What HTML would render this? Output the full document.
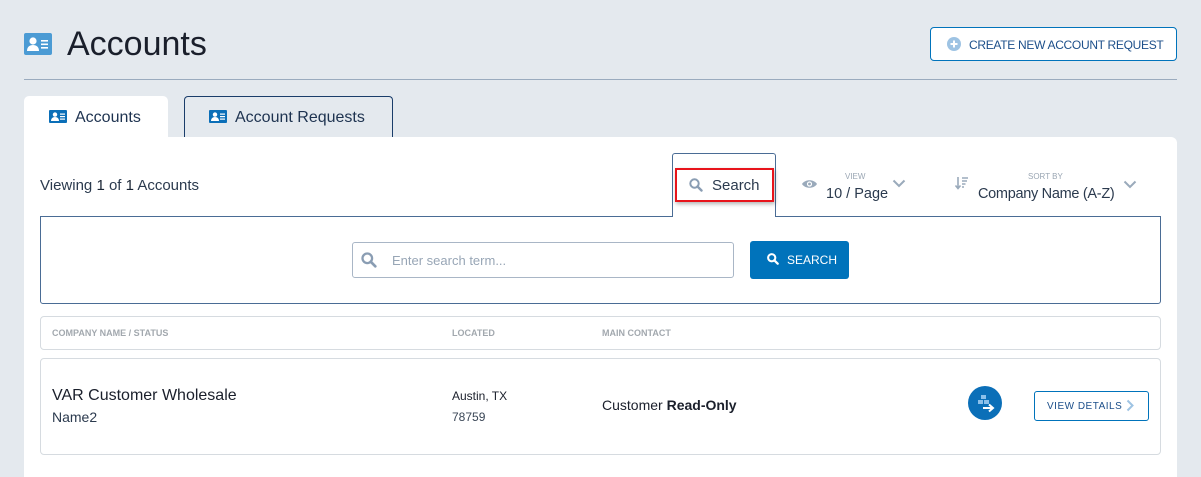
<!DOCTYPE html>
<html><head><meta charset="utf-8"><style>
*{box-sizing:border-box;margin:0;padding:0}
body{width:1201px;height:460px;background:#e4e9ee;font-family:"Liberation Sans",sans-serif;color:#1e2b3c;position:relative;overflow:hidden}
.a{position:absolute}
.t{white-space:nowrap}
</style></head><body>
<svg class="a" style="left:24px;top:33px" width="28" height="22" viewBox="0 0 28 22"><rect width="28" height="22" rx="2" fill="#4b9bd4"/><circle cx="9" cy="8" r="3.6" fill="#fff"/><path d="M3 18c0-4 2.5-6 6-6s6 2 6 6z" fill="#fff"/><rect x="17" y="7" width="7" height="1.6" fill="#fff"/><rect x="17" y="10.5" width="7" height="1.6" fill="#fff"/><rect x="17" y="14" width="7" height="1.6" fill="#fff"/></svg>
<div class="a t" style="left:67px;top:25px;font-size:34px;color:#1a1f2b">Accounts</div>
<div class="a" style="left:930px;top:27px;width:247px;height:34px;border:1px solid #0073bb;border-radius:4px;background:#fff"></div>
<svg class="a" style="left:947px;top:37px" width="14" height="14" viewBox="0 0 14 14"><circle cx="7" cy="7" r="7" fill="#9ec3e3"/><path d="M7 3.5v7M3.5 7h7" stroke="#fff" stroke-width="2"/></svg>
<div class="a t" style="left:969px;top:38px;font-size:12px;color:#1c4f8a;letter-spacing:-0.3px">CREATE NEW ACCOUNT REQUEST</div>
<div class="a" style="left:24px;top:79px;width:1153px;height:1px;background:#9aabbe"></div>
<div class="a" style="left:24px;top:96px;width:144px;height:45px;background:#fff;border-radius:5px 5px 0 0"></div>
<svg class="a" style="left:49px;top:110px" width="18" height="13" viewBox="0 0 18 13"><rect width="18" height="13" rx="1" fill="#0b6fb8"/><circle cx="6" cy="4.6" r="2.2" fill="#fff"/><path d="M2 11c0-2.6 1.7-4 4-4s4 1.4 4 4z" fill="#fff"/><rect x="11" y="3.5" width="5" height="1.2" fill="#fff"/><rect x="11" y="6" width="5" height="1.2" fill="#fff"/><rect x="11" y="8.5" width="5" height="1.2" fill="#fff"/></svg>
<div class="a t" style="left:75px;top:109px;font-size:16px;color:#1e3350">Accounts</div>
<div class="a" style="left:184px;top:96px;width:209px;height:41px;border:1px solid #1a3d6a;border-bottom:none;border-radius:4px 4px 0 0"></div>
<svg class="a" style="left:209px;top:110px" width="18" height="13" viewBox="0 0 18 13"><rect width="18" height="13" rx="1" fill="#0b6fb8"/><circle cx="6" cy="4.6" r="2.2" fill="#fff"/><path d="M2 11c0-2.6 1.7-4 4-4s4 1.4 4 4z" fill="#fff"/><rect x="11" y="3.5" width="5" height="1.2" fill="#fff"/><rect x="11" y="6" width="5" height="1.2" fill="#fff"/><rect x="11" y="8.5" width="5" height="1.2" fill="#fff"/></svg>
<div class="a t" style="left:235px;top:109px;font-size:16px;color:#1e3350">Account Requests</div>
<div class="a" style="left:24px;top:137px;width:1153px;height:340px;background:#fff;border-radius:0 6px 0 0"></div>
<div class="a t" style="left:40px;top:177px;font-size:15px;color:#2b3a4e">Viewing <span style="color:#1a2535">1</span> of <span style="color:#1a2535">1</span> Accounts</div>
<div class="a" style="left:672px;top:153px;width:104px;height:64px;border:1px solid #4a6c95;border-bottom:none;border-radius:3px 3px 0 0;background:#fff;z-index:2"></div>
<div class="a" style="left:675px;top:168px;width:99px;height:34px;border:2px solid #e8141b;box-shadow:1px 2px 4px rgba(0,0,0,.3);z-index:3"></div>
<svg class="a" style="left:689px;top:178px;z-index:4" width="14" height="14" viewBox="0 0 14 14"><circle cx="5.5" cy="5.5" r="4.2" fill="none" stroke="#8a9db3" stroke-width="2"/><path d="M8.5 8.5l4 4" stroke="#8a9db3" stroke-width="2.4" stroke-linecap="round"/></svg>
<div class="a t" style="left:712px;top:177px;font-size:15px;color:#2b3a4e;z-index:4">Search</div>
<svg class="a" style="left:801px;top:178px" width="17" height="12" viewBox="0 0 17 12"><path d="M1 6C4 1 13 1 16 6C13 11 4 11 1 6z" fill="#9aaabb"/><circle cx="8.5" cy="6" r="2.6" fill="#fff"/><circle cx="8.5" cy="6" r="1.4" fill="#9aaabb"/></svg>
<div class="a t" style="left:845px;top:172px;font-size:8px;color:#9aa6b3">VIEW</div>
<div class="a t" style="left:826px;top:186px;font-size:14.5px;color:#2b3a4e">10 / Page</div>
<svg class="a" style="left:892px;top:179px" width="14" height="9" viewBox="0 0 14 9"><path d="M1.5 1.5l5.5 5.5 5.5-5.5" fill="none" stroke="#9aaabb" stroke-width="2"/></svg>
<svg class="a" style="left:955px;top:176px" width="14" height="14" viewBox="0 0 14 14"><path d="M3 1v11M0.5 9.5L3 12.5 5.5 9.5" fill="none" stroke="#9aaabb" stroke-width="1.6"/><path d="M7 2h6M7 5h5M7 8h3.5M7 11h2" stroke="#9aaabb" stroke-width="1.6"/></svg>
<div class="a t" style="left:1028px;top:172px;font-size:8px;color:#9aa6b3">SORT BY</div>
<div class="a t" style="left:978px;top:186px;font-size:14.5px;color:#2b3a4e;letter-spacing:-0.3px">Company Name (A-Z)</div>
<svg class="a" style="left:1123px;top:180px" width="14" height="9" viewBox="0 0 14 9"><path d="M1.5 1.5l5.5 5.5 5.5-5.5" fill="none" stroke="#9aaabb" stroke-width="2"/></svg>
<div class="a" style="left:40px;top:216px;width:1121px;height:88px;border:1px solid #4a6c95;border-radius:0 0 3px 3px"></div>
<div class="a" style="left:352px;top:242px;width:382px;height:36px;border:1px solid #a9b6c6;border-radius:3px"></div>
<svg class="a" style="left:361px;top:252px" width="16" height="16" viewBox="0 0 14 14"><circle cx="5.5" cy="5.5" r="4.2" fill="none" stroke="#8a9db3" stroke-width="2"/><path d="M8.5 8.5l4 4" stroke="#8a9db3" stroke-width="2.4" stroke-linecap="round"/></svg>
<div class="a t" style="left:392px;top:253px;font-size:13px;color:#98a6b6">Enter search term...</div>
<div class="a" style="left:750px;top:241px;width:99px;height:38px;background:#0073bb;border-radius:3px"></div>
<svg class="a" style="left:767px;top:253px" width="12" height="12" viewBox="0 0 14 14"><circle cx="5.5" cy="5.5" r="4.2" fill="none" stroke="#fff" stroke-width="2.4"/><path d="M8.5 8.5l4 4" stroke="#fff" stroke-width="2.6" stroke-linecap="round"/></svg>
<div class="a t" style="left:787px;top:253px;font-size:12px;color:#fff">SEARCH</div>
<div class="a" style="left:40px;top:316px;width:1121px;height:34px;border:1px solid #d6dbe0;border-radius:4px"></div>
<div class="a t" style="left:52px;top:328px;font-size:9px;font-weight:bold;color:#a2a8ae">COMPANY NAME / STATUS</div>
<div class="a t" style="left:452px;top:328px;font-size:9px;font-weight:bold;color:#a2a8ae">LOCATED</div>
<div class="a t" style="left:602px;top:328px;font-size:9px;font-weight:bold;color:#a2a8ae">MAIN CONTACT</div>
<div class="a" style="left:40px;top:358px;width:1121px;height:97px;border:1px solid #d6dbe0;border-radius:4px"></div>
<div class="a t" style="left:52px;top:387px;font-size:16px;color:#1a1f2b">VAR Customer Wholesale</div>
<div class="a t" style="left:52px;top:409px;font-size:14px;color:#2b3a4e">Name2</div>
<div class="a t" style="left:452px;top:389px;font-size:12px;color:#1a1f2b">Austin, TX</div>
<div class="a t" style="left:452px;top:410px;font-size:12px;color:#3a4656">78759</div>
<div class="a t" style="left:602px;top:397px;font-size:14px;color:#1a1f2b">Customer <b style="color:#1a1f2b">Read-Only</b></div>
<svg class="a" style="left:968px;top:386px" width="34" height="34" viewBox="0 0 34 34"><circle cx="17" cy="17" r="17" fill="#0b6fb8"/><rect x="13" y="9" width="5" height="4" fill="#8cc0ea"/><rect x="10" y="14" width="5" height="4" fill="#8cc0ea"/><rect x="16" y="14" width="5" height="4" fill="#8cc0ea"/><path d="M15 22h10M21 18.5l4 3.5-4 3.5" fill="none" stroke="#fff" stroke-width="2"/></svg>
<div class="a" style="left:1034px;top:391px;width:115px;height:30px;border:1px solid #0073bb;border-radius:3px"></div>
<div class="a t" style="left:1047px;top:401px;font-size:10px;letter-spacing:.5px;color:#1c4f8a">VIEW DETAILS</div>
<svg class="a" style="left:1126px;top:399px" width="8" height="13" viewBox="0 0 8 13"><path d="M1.5 1.5l5 5-5 5" fill="none" stroke="#9ec3e3" stroke-width="2"/></svg>
</body></html>
